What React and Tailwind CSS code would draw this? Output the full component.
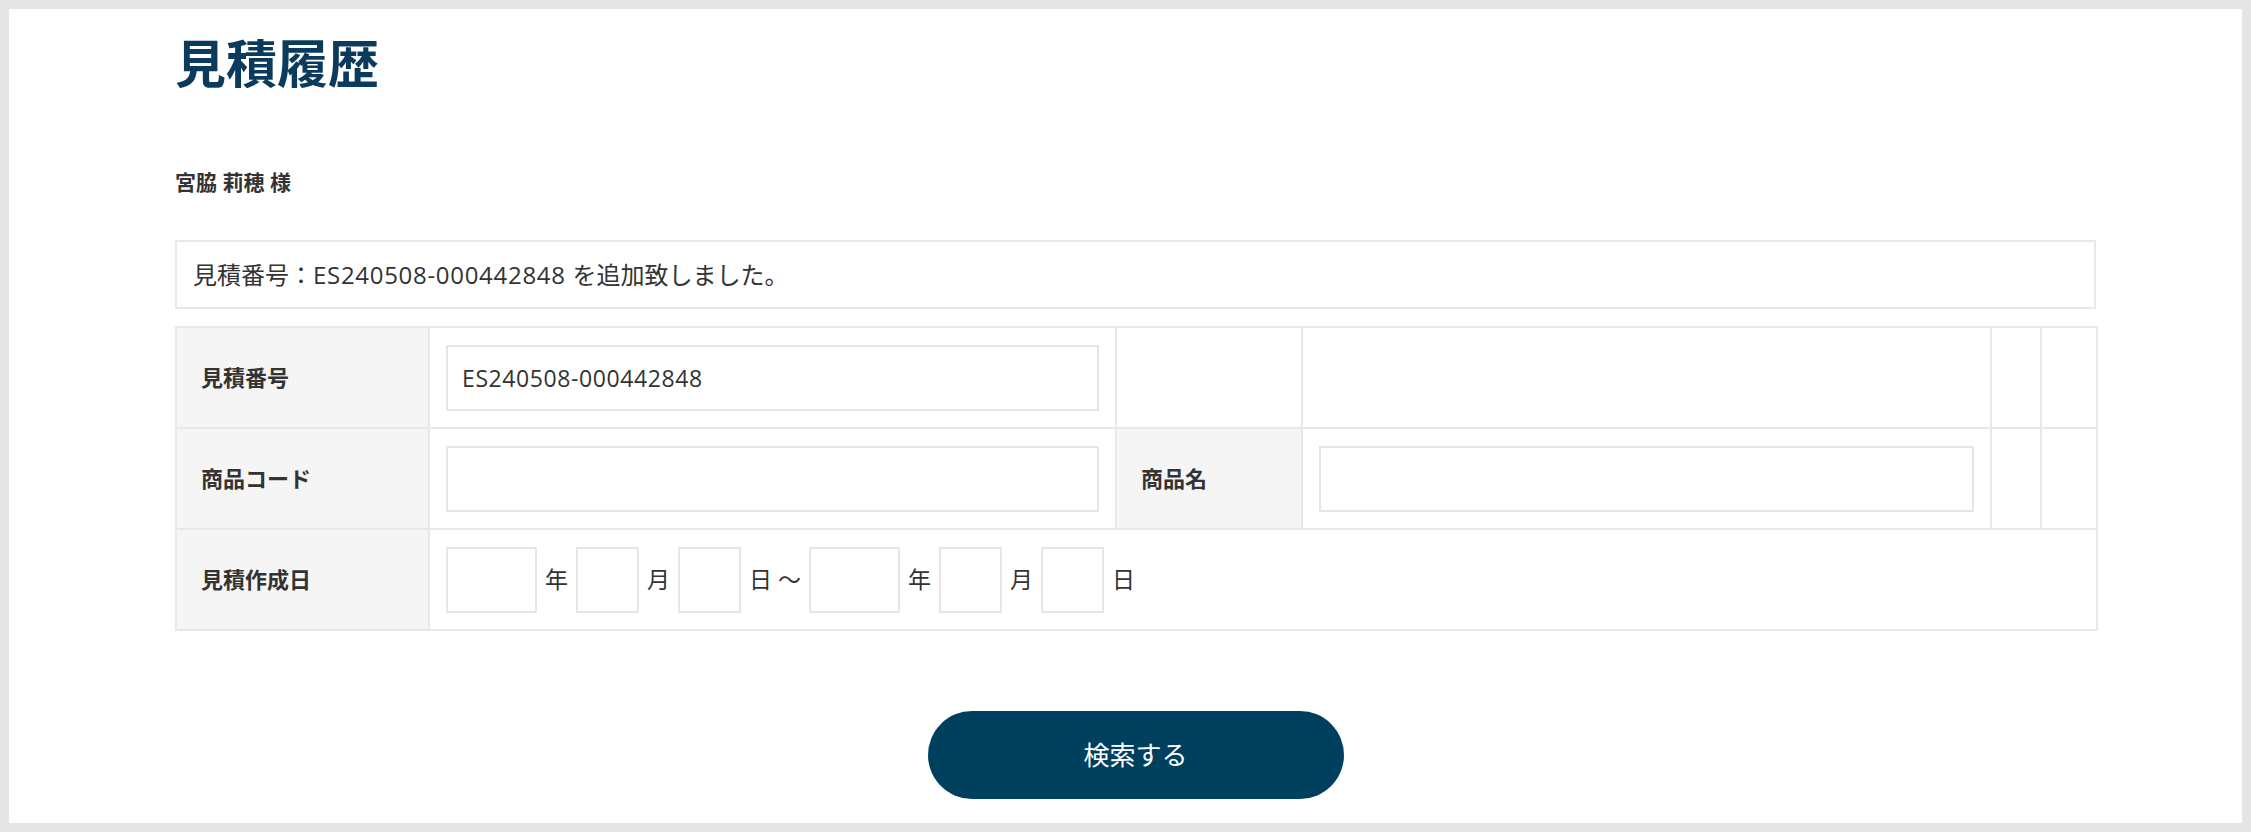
const labelCell =
  "bg-[#f5f5f5] border-2 border-[#e8e8e8] pl-[24px] text-left align-middle text-[22px] font-bold text-[#333]";
const valueCell = "border-2 border-[#e8e8e8] align-middle px-[16px]";
const inputCls =
  "block w-full h-[66px] border-2 border-[#e6e6e6] bg-white px-[14px] text-[23px] tracking-[0.6px] text-[#333] outline-none";

const DateBox = ({ w }) => (
  <input type="text" className={`${w} h-[66px] border-2 border-[#e6e6e6] bg-white outline-none`} />
);

const App = () => {
  return (
    <div
      className="w-full h-[832px] border-[9px] border-[#e5e5e5] bg-white overflow-hidden text-[#333]"
      style={{ fontFamily: '"Open Sans", "Noto Sans CJK JP", sans-serif' }}
    >
      <div className="ml-[166px] w-[1921px] pt-[29px]">
        <h1 className="text-[51px] leading-none font-bold text-[#0b3b5c] h-[50px]">見積履歴</h1>

        <p className="mt-[84px] text-[21px] leading-none font-bold h-[22px]">宮脇 莉穂 様</p>

        <div className="mt-[46px] h-[69px] border-2 border-[#e8e8e8] flex items-center pl-[16px] text-[24px]">
          <span>
            見積番号：<span className="tracking-[0.7px]">ES240508-000442848 </span>を追加致しました。
          </span>
        </div>

        <table className="mt-[17px] w-[1921px] table-fixed border-collapse border-2 border-[#e8e8e8]">
          <colgroup>
            <col className="w-[253px]" />
            <col className="w-[687px]" />
            <col className="w-[186px]" />
            <col className="w-[689px]" />
            <col className="w-[50px]" />
            <col className="w-[56px]" />
          </colgroup>
          <tbody>
            <tr className="h-[101px]">
              <th className={labelCell}>見積番号</th>
              <td className={valueCell}>
                <input type="text" className={inputCls} defaultValue="ES240508-000442848" />
              </td>
              <td className="border-2 border-[#e8e8e8]"></td>
              <td className="border-2 border-[#e8e8e8]"></td>
              <td className="border-2 border-[#e8e8e8]"></td>
              <td className="border-2 border-[#e8e8e8]"></td>
            </tr>
            <tr className="h-[101px]">
              <th className={labelCell}>商品コード</th>
              <td className={valueCell}>
                <input type="text" className={inputCls} />
              </td>
              <th className={labelCell}>商品名</th>
              <td className={valueCell}>
                <input type="text" className={inputCls} />
              </td>
              <td className="border-2 border-[#e8e8e8]"></td>
              <td className="border-2 border-[#e8e8e8]"></td>
            </tr>
            <tr className="h-[101px]">
              <th className={labelCell}>見積作成日</th>
              <td className={valueCell} colSpan={5}>
                <div className="flex items-center gap-[8px] text-[23px]">
                  <DateBox w="w-[91px]" />
                  <span>年</span>
                  <DateBox w="w-[63px]" />
                  <span>月</span>
                  <DateBox w="w-[63px]" />
                  <span>日 ～</span>
                  <DateBox w="w-[91px]" />
                  <span>年</span>
                  <DateBox w="w-[63px]" />
                  <span>月</span>
                  <DateBox w="w-[63px]" />
                  <span>日</span>
                </div>
              </td>
            </tr>
          </tbody>
        </table>

        <div className="mt-[80px] flex justify-center">
          <button
            type="button"
            className="w-[416px] h-[88px] rounded-full bg-[#00405f] text-white text-[26px]"
          >
            検索する
          </button>
        </div>
      </div>
    </div>
  );
};

export default App;
